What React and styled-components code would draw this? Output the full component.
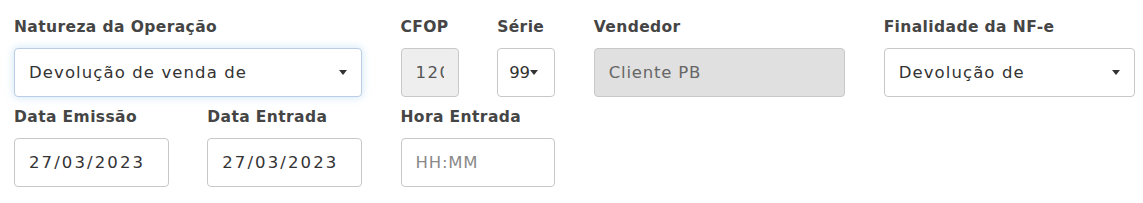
import React from "react";
import styled, { createGlobalStyle } from "styled-components";

const GlobalStyle = createGlobalStyle`
  body {
    margin: 0;
    background: #fff;
    font-family: "DejaVu Sans", "Liberation Sans", sans-serif;
  }
`;

const Form = styled.div`
  display: grid;
  grid-template-columns: repeat(12, 1fr);
  column-gap: 38.5px;
  row-gap: 10px;
  width: 1121px;
  padding: 17px 0 0 14px;
`;

const Field = styled.div`
  grid-column: span ${(p) => p.span};
  display: flex;
  flex-direction: column;
  min-width: 0;
`;

const Label = styled.label`
  font-size: 15.5px;
  font-weight: bold;
  letter-spacing: 0.4px;
  color: #454545;
  line-height: 21px;
  margin-bottom: 10px;
  white-space: nowrap;
`;

const boxBase = `
  box-sizing: border-box;
  height: 49px;
  width: 100%;
  border: 1px solid #c8c8c8;
  border-radius: 4px;
  font-family: inherit;
  font-size: 16.5px;
  color: #333;
`;

const Input = styled.input`
  ${boxBase}
  padding: 0 14px;
  letter-spacing: ${(p) => p.$spacing || "0.8px"};
  background: ${(p) => p.$bg || "#fff"};
  outline: none;
  &::placeholder {
    color: #8a8a8a;
  }
  &:disabled {
    color: ${(p) => p.$color || "#555"};
  }
`;

const Select = styled.div`
  ${boxBase}
  display: flex;
  align-items: center;
  padding: 0 ${(p) => (p.$narrow ? "11px" : "14px")};
  letter-spacing: ${(p) => (p.$narrow ? "0" : "1.1px")};
  background: #fff;
  border-color: ${(p) => (p.$focus ? "#b9cde3" : "#c8c8c8")};
  box-shadow: ${(p) => (p.$focus ? "0 0 8px rgba(102, 175, 233, 0.35)" : "none")};
`;

const SelectText = styled.span`
  flex: ${(p) => (p.$tight ? "0 0 auto" : "1")};
  min-width: 0;
  overflow: hidden;
  white-space: nowrap;
`;

const Caret = styled.span`
  flex-shrink: 0;
  width: 0;
  height: 0;
  border-left: 4.5px solid transparent;
  border-right: 4.5px solid transparent;
  border-top: 5px solid #333;
`;

export default function App() {
  return (
    <>
      <GlobalStyle />
      <Form>
        <Field span={4}>
          <Label>Natureza da Operação</Label>
          <Select $focus>
            <SelectText>Devolução de venda de</SelectText>
            <Caret />
          </Select>
        </Field>
        <Field span={1}>
          <Label>CFOP</Label>
          <Input disabled value="1200" $bg="#eee" $spacing="1.5px" readOnly />
        </Field>
        <Field span={1}>
          <Label>Série</Label>
          <Select $narrow>
            <SelectText $tight>99</SelectText>
            <Caret />
          </Select>
        </Field>
        <Field span={3}>
          <Label>Vendedor</Label>
          <Input disabled value="Cliente PB" $bg="#e0e0e0" $color="#666" readOnly />
        </Field>
        <Field span={3}>
          <Label>Finalidade da NF-e</Label>
          <Select>
            <SelectText>Devolução de</SelectText>
            <Caret />
          </Select>
        </Field>
        <Field span={2}>
          <Label>Data Emissão</Label>
          <Input defaultValue="27/03/2023" $spacing="2.1px" />
        </Field>
        <Field span={2}>
          <Label>Data Entrada</Label>
          <Input defaultValue="27/03/2023" $spacing="2.1px" />
        </Field>
        <Field span={2}>
          <Label>Hora Entrada</Label>
          <Input placeholder="HH:MM" />
        </Field>
      </Form>
    </>
  );
}
